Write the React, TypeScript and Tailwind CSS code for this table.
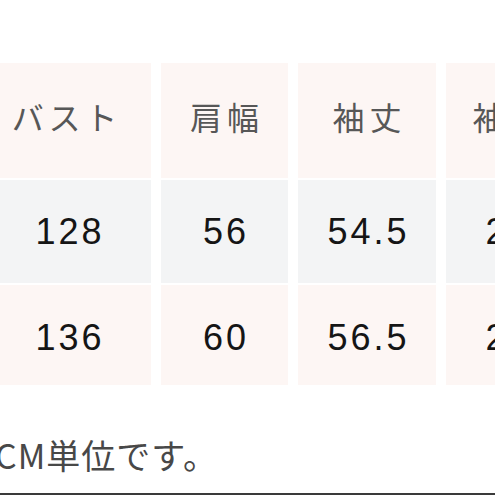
const headers = ["バスト", "肩幅", "袖丈", "袖口"];
const rows = [
  ["128", "56", "54.5", "25"],
  ["136", "60", "56.5", "26"],
];

export default function App() {
  return (
    <div className="relative h-[495px] w-[495px] overflow-hidden bg-white">
      <div className="pt-[63px]">
        <div className="ml-[-22px] grid w-[590px] grid-cols-[173px_127px_138px_122px] gap-x-[10px] gap-y-[2px]">
          {headers.map((h) => (
            <div
              key={h}
              className="flex h-[115px] items-center justify-center bg-[#fdf6f4] pb-[10px] pl-[0.15em] text-[32px] tracking-[0.15em] text-[#575757]"
              style={{ fontFamily: '"Noto Sans CJK JP", sans-serif' }}
            >
              {h}
            </div>
          ))}
          {rows.map((r, i) =>
            r.map((v, j) => (
              <div
                key={`${i}-${j}`}
                className={`flex items-center justify-center text-[36px] tracking-[3px] text-[#151515] ${
                  i === 0 ? "h-[103px] bg-[#f3f4f5]" : "h-[100px] bg-[#fdf6f4] pt-[5px]"
                } ${j === 0 ? "pl-[11px]" : "pl-[3px]"}`}
                style={{ fontFamily: '"Liberation Sans", Arial, sans-serif' }}
              >
                {v}
              </div>
            ))
          )}
        </div>
        <p
          className="ml-[-5px] mt-[50px] text-[34px] leading-[40px] tracking-[1px] text-[#484848]"
          style={{ fontFamily: '"Noto Sans CJK JP", sans-serif' }}
        >
          CM単位です。
        </p>
      </div>
      <div className="absolute bottom-0 left-0 h-[2px] w-full bg-[#3a3a3a]" />
    </div>
  );
}
